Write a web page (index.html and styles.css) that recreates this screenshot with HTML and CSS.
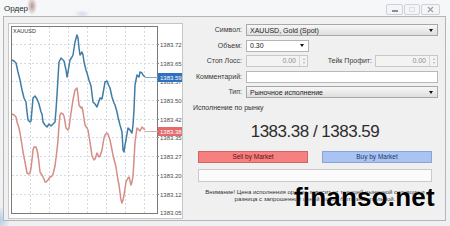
FILE: index.html
```html
<!DOCTYPE html>
<html lang="ru">
<head>
<meta charset="utf-8">
<title>Ордер</title>
<link rel="stylesheet" href="styles.css">
</head>
<body>
<div class="window">
  <div class="titlebar">
    <span class="title">Ордер</span>
    <div class="caption-buttons">
      <span class="cbtn cbtn-min"><i></i></span>
      <span class="cbtn cbtn-max"><i></i></span>
      <span class="cbtn cbtn-close">
        <svg width="7" height="7" viewBox="0 0 7 7"><path d="M1 1L6 6M6 1L1 6" stroke="#9aa0a8" stroke-width="1.2" fill="none"/></svg>
      </span>
    </div>
  </div>
  <div class="dialog">
    <div class="chart">
      <svg width="175" height="196" viewBox="8 23 175 196">
        <rect x="8.5" y="23.5" width="174" height="195" fill="#fff" stroke="#c6c6c6"/>
        <rect x="11.5" y="26.5" width="146" height="187" fill="#fff" stroke="#7a7a7a"/>
        <g class="grid">
          <path d="M12 44.5H157M12 63.5H157M12 81.5H157M12 100.5H157M12 119.5H157M12 137.5H157M12 156.5H157M12 175.5H157M12 194.5H157"/>
          <path d="M30.5 27V213M49.5 27V213M68.5 27V213M87.5 27V213M106.5 27V213M125.5 27V213M144.5 27V213"/>
        </g>
        <path class="ticks" d="M157 44.5h2M157 63.5h2M157 81.5h2M157 100.5h2M157 119.5h2M157 137.5h2M157 156.5h2M157 175.5h2M157 194.5h2"/>
        <text class="sym" x="13" y="33">XAUUSD</text>
        <polyline class="bid" points="12,114 14,115 16,117 17,122 19,128 20,133 22,145 23,152 25,162 27,173 29,174 30,173 31,168 32,160 33,150 34,147 36,147 37,150 38,155 39,163 40,172 42,175 44,179 45,182 46,182 48,180 50,177 52,176 53,174 55,166 56,158 57,150 58,140 59,125 60,115 61,113 63,114 64,116 65,122 66,128 68,130 69,128 70,120 71,113 73,100 75,90 77,88 78,95 79,105 81,108 82,107 83,112 85,125 87,128 88,130 90,142 92,156 94,160 95,159 97,153 99,157 100,156 102,150 104,138 105,135 107,133 108,134 110,140 112,150 113,155 115,163 116,167 118,180 119,185 121,200 122,203 123,200 124,195 126,182 128,178 129,177 131,185 132,182 133,176 134,160 135,142 137,128 139,130 140,131 142,127 143,128 145,130"/>
        <polyline class="ask" points="12,60 14,61 16,63 18,72 20,80 22,90 24,98 26,102 27,112 28,120 30,122 31,121 32,110 33,98 35,96 37,99 39,104 41,112 42,114 43,122 45,125 47,127 49,124 51,126 53,124 55,122 56,110 57,95 58,78 59,62 61,58 63,60 64,61 66,70 67,77 68,72 70,60 72,57 73,55 75,42 77,35 78,38 79,48 80,55 82,52 83,55 84,62 86,70 87,73 89,80 91,86 93,102 95,104 97,107 98,104 100,98 102,99 104,88 105,82 107,81 109,86 110,88 112,97 114,103 115,105 117,112 118,117 120,125 122,132 123,150 124,152 125,145 126,140 128,128 130,130 132,133 133,125 134,110 135,85 136,80 137,75 139,77 140,72 142,73 143,75 145,77"/>
        <path class="ask-level" d="M145 77.5H158"/>
        <path class="bid-level" d="M145 131.5H158"/>
        <g class="axis">
          <text x="160" y="46.5">1383.72</text>
          <text x="160" y="65.5">1383.65</text>
          <text x="160" y="84">1383.57</text>
          <text x="160" y="102.5">1383.50</text>
          <text x="160" y="121.5">1383.42</text>
          <text x="160" y="140">1383.35</text>
          <text x="160" y="158.5">1383.27</text>
          <text x="160" y="177.5">1383.20</text>
          <text x="160" y="196.5">1383.12</text>
          <text x="160" y="214.5">1383.05</text>
        </g>
        <rect class="ask-tag" x="158" y="73" width="24" height="9"/>
        <text class="tag" x="160" y="79.8">1383.59</text>
        <rect class="bid-tag" x="158" y="127" width="24" height="9"/>
        <text class="tag" x="160" y="133.8">1383.38</text>
      </svg>
    </div>
    <div class="form">
      <div class="fields">
        <label>Символ:</label>
        <div class="combo combo-list"><span>XAUUSD, Gold (Spot)</span><i class="arrow"></i></div>
        <label>Объем:</label>
        <div class="combo combo-edit"><span>0.30</span><i class="arrow"></i></div>
        <label>Стоп Лосс:</label>
        <div class="pair">
          <div class="spin"><span class="spin-value">0.00</span><span class="spin-btns"><i class="up"></i><i class="down"></i></span></div>
          <label class="pair-label">Тейк Профит:</label>
          <div class="spin spin-take"><span class="spin-value">0.00</span><span class="spin-btns"><i class="up"></i><i class="down"></i></span></div>
        </div>
        <label>Комментарий:</label>
        <div class="text-input"></div>
        <label>Тип:</label>
        <div class="combo combo-list"><span>Рыночное исполнение</span><i class="arrow"></i></div>
      </div>
      <div class="exec">Исполнение по рынку</div>
      <div class="market">
        <div class="price">1383.38 / 1383.59</div>
        <div class="actions">
          <button class="btn sell">Sell by Market</button>
          <button class="btn buy">Buy by Market</button>
        </div>
        <div class="progress"></div>
        <p class="warning">Внимание! Цена исполнения ордера зависит от текущей рыночной ситуации и<br>разница с запрошенной ценой может быть значительной.</p>
      </div>
    </div>
  </div>
  <div class="watermark">finanso.net</div>
</div>
</body>
</html>
```
FILE: styles.css
```css
* { box-sizing: border-box; }
html, body { margin: 0; padding: 0; }
body {
  width: 450px;
  height: 226px;
  overflow: hidden;
  font-family: "Liberation Sans", Arial, sans-serif;
  color: #333;
}
.window {
  position: relative;
  width: 450px;
  height: 226px;
  background:
    radial-gradient(ellipse 10px 14px at 0 220px, rgba(110, 165, 215, 0.45), rgba(110, 165, 215, 0)),
    linear-gradient(#f6f7f9, #eef0f3);
}
.titlebar {
  height: 16px;
  display: flex;
  justify-content: space-between;
  align-items: center;
  padding: 0 10px 0 4px;
  background:
    radial-gradient(ellipse 5px 9px at 32px 6px, rgba(130, 70, 60, 0.55), rgba(130, 70, 60, 0)),
    radial-gradient(ellipse 8px 4px at 82px 14px, rgba(150, 170, 200, 0.35), rgba(150, 170, 200, 0));
}
.title { font-size: 8px; color: #2a2a2a; }
.caption-buttons { display: flex; gap: 1px; align-self: flex-start; margin-top: 4px; }
.cbtn {
  height: 11px;
  border: 1px solid #cdd1d8;
  border-radius: 2px;
  background: #f4f5f7;
  display: flex;
  align-items: center;
  justify-content: center;
}
.cbtn-min { width: 17px; align-items: flex-end; padding-bottom: 2px; }
.cbtn-min i { width: 6px; height: 2px; background: #8a8f96; }
.cbtn-max { width: 16px; }
.cbtn-max i { width: 6px; height: 5px; border: 1px solid #dde0e4; }
.cbtn-close { width: 19px; }
.cbtn-close svg { display: block; }

.dialog {
  margin: 0 4px 0 3px;
  height: 205px;
  border: 1px solid #b5b5b5;
  background: #f0f0f0;
  display: flex;
  padding: 6px 0 0 4px;
}
.chart { width: 175px; height: 196px; flex: none; }
.chart svg { display: block; }
.grid path { stroke: #d5d9e0; stroke-width: 1; stroke-dasharray: 2 2; fill: none; }
.ticks { stroke: #888; stroke-width: 1; }
.sym { font: 5.5px "Liberation Sans", Arial, sans-serif; fill: #333; }
.axis text { font: 6px "Liberation Sans", Arial, sans-serif; fill: #4a4a4a; }
.ask { fill: none; stroke: #3f7ca6; stroke-width: 1.5; stroke-linejoin: round; }
.bid { fill: none; stroke: #d68d85; stroke-width: 1.5; stroke-linejoin: round; }
.ask-level { stroke: #7ea8c6; stroke-width: 1; }
.bid-level { stroke: #e0aaa4; stroke-width: 1; }
.ask-tag { fill: #2f70c0; }
.bid-tag { fill: #e46b6b; }
.tag { font: 6px "Liberation Sans", Arial, sans-serif; fill: #fff; }

.form {
  flex: 1;
  padding: 1px 7px 0 0;
  display: flex;
  flex-direction: column;
}
.fields {
  display: grid;
  grid-template-columns: 59px 1fr;
  grid-auto-rows: 12px;
  column-gap: 4px;
  row-gap: 3.5px;
}
.fields label {
  font-size: 7px;
  line-height: 12px;
  text-align: right;
  white-space: nowrap;
  color: #3a3a3a;
}
.combo {
  display: flex;
  justify-content: space-between;
  align-items: center;
  border: 1px solid #a8a8a8;
  padding: 0 4px 0 3px;
  font-size: 7px;
  color: #222;
}
.combo-list { background: linear-gradient(#f7f7f7, #dedede); }
.combo-edit { background: #fff; width: 63px; border-color: #b4b4b4; }
.arrow {
  width: 0;
  height: 0;
  border-left: 2px solid transparent;
  border-right: 2px solid transparent;
  border-top: 3px solid #111;
}
.pair { display: flex; gap: 3px; }
.pair .pair-label {
  flex: 1;
  font-size: 7px;
  line-height: 12px;
  text-align: right;
  color: #3a3a3a;
}
.spin {
  width: 62px;
  display: flex;
  border: 1px solid #c8c8c8;
  background: #f3f3f3;
}
.spin-take { width: 63px; }
.spin-value {
  flex: 1;
  text-align: right;
  padding-right: 3px;
  font-size: 7px;
  line-height: 10px;
  color: #8e8e8e;
}
.spin-btns {
  width: 8px;
  border-left: 1px solid #d6d6d6;
  display: flex;
  flex-direction: column;
  justify-content: space-evenly;
  align-items: center;
}
.spin-btns i { width: 0; height: 0; border-left: 1.5px solid transparent; border-right: 1.5px solid transparent; }
.spin-btns .up { border-bottom: 2px solid #b0b0b0; }
.spin-btns .down { border-top: 2px solid #b0b0b0; }
.text-input { background: #fff; border: 1px solid #b8b8b8; }

.exec {
  margin: 6px 0 0 10px;
  font-size: 7px;
  line-height: 8px;
  color: #333;
}
.market { margin-left: 15px; width: 234px; }
.price {
  margin-top: 11px;
  font-size: 17px;
  line-height: 17px;
  letter-spacing: -0.5px;
  text-align: center;
  color: #2c2c2c;
}
.actions {
  display: flex;
  justify-content: space-between;
  margin-top: 11px;
  height: 11.5px;
}
.btn {
  width: 110px;
  height: 100%;
  padding: 0;
  border: 1px solid;
  font: 6.5px "Liberation Sans", Arial, sans-serif;
}
.sell { background: #f67f7f; border-color: #cf6666; color: #5e1414; }
.buy { background: #a9c3f2; border-color: #88a4d8; color: #1d3670; }
.progress {
  margin-top: 6px;
  height: 13px;
  background: #fbfbfb;
  border: 1px solid #cacaca;
}
.warning {
  margin: 7px 0 0;
  font-size: 6px;
  line-height: 7.5px;
  text-align: center;
  white-space: nowrap;
  color: #333;
}
.watermark {
  position: absolute;
  left: 294px;
  top: 184px;
  font: bold 26px/26px "Liberation Sans", Arial, sans-serif;
  letter-spacing: 0.2px;
  color: #000;
  text-shadow: 0 0 2px #fff;
}
```
